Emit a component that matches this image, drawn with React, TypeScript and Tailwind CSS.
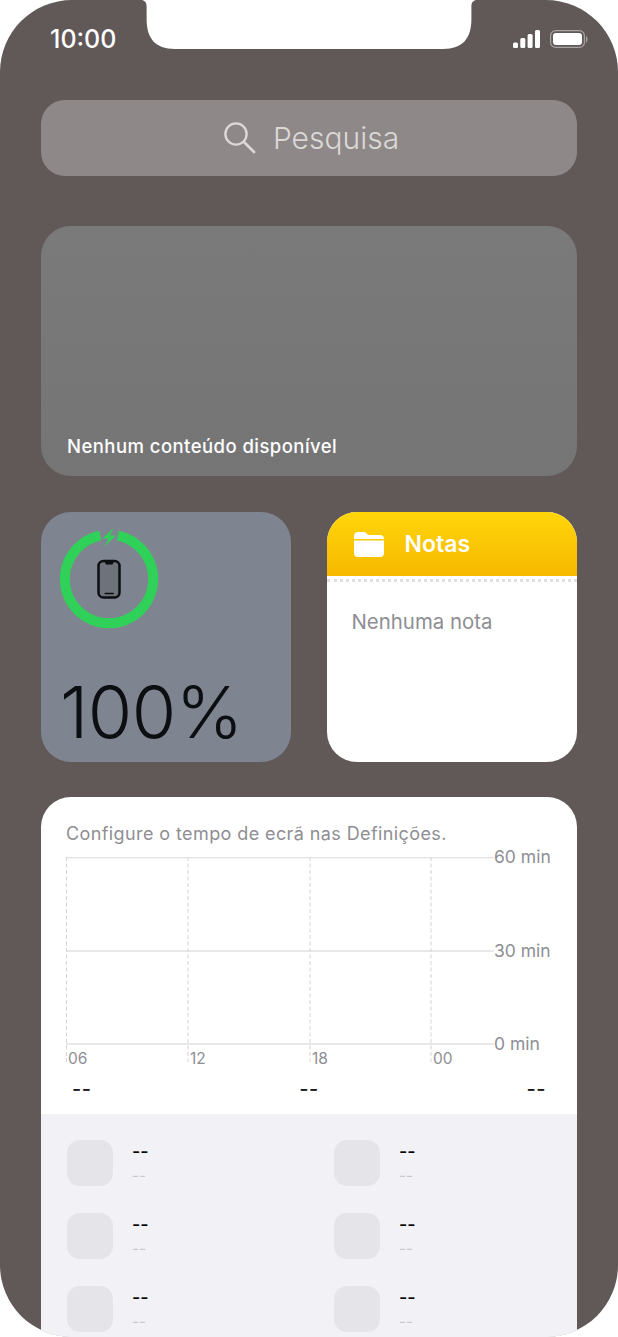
const font = { fontFamily: 'Inter, "Noto Sans", sans-serif' }

function Notch() {
    return (
        <svg className="absolute left-[138px] top-0" width="342" height="50" viewBox="0 0 342 50">
            <path
                d="M2 0H3C6.5 0 8.6 2.5 8.6 6V19C8.6 38 17 49 37 49H305C325 49 333.4 38 333.4 19V6C333.4 2.5 335.5 0 339 0H340V-1H2Z"
                fill="#fff"
            />
        </svg>
    )
}

function StatusIcons() {
    return (
        <svg width="78" height="22" viewBox="0 0 78 22" fill="none">
            <rect x="1" y="14.5" width="5" height="5.5" rx="1.5" fill="#fff" />
            <rect x="8.3" y="10" width="5" height="10" rx="1.5" fill="#fff" />
            <rect x="15.6" y="6" width="5" height="14" rx="1.5" fill="#fff" />
            <rect x="23" y="2" width="5" height="18" rx="1.5" fill="#fff" />
            <rect x="38.6" y="2.6" width="33.8" height="16.8" rx="5" stroke="#a9a4a4" strokeWidth="1.2" />
            <rect x="41" y="5" width="29" height="12" rx="3" fill="#fff" />
            <path d="M74 8C76 8.5 76 13.5 74 15Z" fill="#a9a4a4" />
        </svg>
    )
}

function SearchGlyph() {
    return (
        <svg width="32" height="32" viewBox="0 0 32 32" fill="none" stroke="currentColor" strokeWidth="2.4" strokeLinecap="round">
            <circle cx="12" cy="12" r="10.6" />
            <path d="M20 20L30 30" strokeWidth="2.8" />
        </svg>
    )
}

function BatteryRing() {
    return (
        <svg width="104" height="104" viewBox="0 0 104 104" fill="none">
            <path d="M42.2 8.7A44.2 44.2 0 1 0 59.8 8.7" stroke="#30d158" strokeWidth="10" />
            <path d="M55.5 1L44.5 11.5H50.5L46.5 19.5L58 8.5H52Z" fill="#30d158" />
            <rect x="40.5" y="34" width="21" height="36.5" rx="5" fill="#6d727b" stroke="#0c0e12" strokeWidth="2.5" />
            <path d="M47 34.5H55.5C55.5 37 54.5 37.5 53.5 37.5H49C48 37.5 47 37 47 34.5Z" fill="#0c0e12" />
            <rect x="46.5" y="65.8" width="9.5" height="1.4" rx="0.7" fill="#0c0e12" />
        </svg>
    )
}

function FolderIcon() {
    return (
        <svg width="30" height="25" viewBox="0 0 30 25" fill="#fff">
            <path d="M0 4C0 1.5 1.5 0 4 0H9.5C11.5 0 12.5 1 14 3H26C28.5 3 30 4.5 30 7H0Z" />
            <path d="M0 8.5H30V21C30 23.5 28.5 25 26 25H4C1.5 25 0 23.5 0 21Z" />
        </svg>
    )
}

function ChartLines() {
    const dashed = [0.5, 122, 244, 365]
    const solid = [0.5, 94, 187]
    return (
        <svg width="428" height="206" viewBox="0 0 428 206" fill="none" className="block">
            {solid.map((y) => (
                <line key={y} x1="0" x2="428" y1={y} y2={y} stroke="#e0e0e2" strokeWidth="1.5" />
            ))}
            {dashed.map((x) => (
                <line key={x} x1={x} x2={x} y1="0" y2="205" stroke="#d4d4d7" strokeWidth="1" strokeDasharray="4 2.5" />
            ))}
        </svg>
    )
}

function AppRow() {
    return (
        <div className="flex h-[46px] gap-[19px]">
            <div className="h-[46px] w-[46px] rounded-[13px] bg-[#e4e4e9]" />
            <div className="flex flex-col">
                <span className="h-[24px] text-[18px] font-medium leading-[24px] text-black">--</span>
                <span className="h-[22px] text-[15px] leading-[24px] text-[#c7c7cc]">--</span>
            </div>
        </div>
    )
}

export default function App() {
    return (
        <div style={font} className="relative h-[1337px] w-[618px] overflow-hidden rounded-[72px] bg-[#615858]">
            <Notch />
            <div className="absolute left-[50px] top-[24px] text-[25px] font-medium leading-[30px] text-white">10:00</div>
            <div className="absolute left-[512px] top-[28px]">
                <StatusIcons />
            </div>

            <div className="flex flex-col px-[41px] pt-[100px]">
                <div className="flex h-[76px] items-center justify-center gap-[17px] rounded-[24px] bg-[#8e8888] pl-[5px] text-[#dcd8d6]">
                    <SearchGlyph />
                    <span className="text-[30px] font-light">Pesquisa</span>
                </div>

                <div className="mt-[50px] flex h-[250px] items-end rounded-[30px] bg-gradient-to-b from-[#7a7a7b] to-[#757576] px-[26px] pb-[18px]">
                    <span className="text-[18.5px] font-medium leading-[24px] tracking-[0.45px] text-white">Nenhum conteúdo disponível</span>
                </div>

                <div className="mt-[36px] flex justify-between">
                    <div className="flex h-[250px] w-[250px] flex-col justify-between rounded-[30px] bg-[#7e8590] pb-[6px] pl-[17px] pt-[15px]">
                        <BatteryRing />
                        <span className="pl-[2px] text-[72px] font-[350] leading-[88px] tracking-[-0.5px] text-[#0c0e12]">100%</span>
                    </div>
                    <div className="h-[250px] w-[250.5px] overflow-hidden rounded-[30px] bg-white">
                        <div className="flex h-[64px] items-center gap-[21px] bg-gradient-to-b from-[#ffd60a] to-[#f6b800] pl-[27px]">
                            <FolderIcon />
                            <span className="text-[23px] font-semibold text-white">Notas</span>
                        </div>
                        <div className="mt-[3px] h-[3px] border-t-[3px] border-dotted border-[#e0e0e2]" />
                        <p className="mt-[28px] pl-[25px] text-[20.4px] leading-[24px] text-[#8e8e93]">Nenhuma nota</p>
                    </div>
                </div>

                <div className="mt-[35px] h-[600px] overflow-hidden rounded-t-[30px] bg-white">
                    <div className="h-[317px] px-[25px] pt-[26px]">
                        <p className="h-[34px] text-[18px] leading-[22px] tracking-[0.4px] text-[#8e8e93]">Configure o tempo de ecrã nas Definições.</p>
                        <div className="flex">
                            <ChartLines />
                            <div className="-mt-[12px] flex h-[211px] flex-col justify-between text-[17.5px] leading-[24px] text-[#8e8e93]">
                                <span>60 min</span>
                                <span>30 min</span>
                                <span>0 min</span>
                            </div>
                        </div>
                        <div className="-mt-[13px] grid w-[428px] grid-cols-[122px_122px_121px_63px] pl-[2px] text-[15.5px] leading-[18px] text-[#8e8e93]">
                            <span>06</span>
                            <span>12</span>
                            <span>18</span>
                            <span>00</span>
                        </div>
                        <div className="mt-[9px] flex justify-between px-[6px] text-[20px] font-medium leading-[24px] tracking-[0.5px] text-[#1c1c1e]">
                            <span>--</span>
                            <span>--</span>
                            <span>--</span>
                        </div>
                    </div>
                    <div className="grid h-[300px] grid-cols-[267px_1fr] content-start gap-y-[27px] bg-[#f1f1f6] pl-[26px] pt-[26px]">
                        <AppRow />
                        <AppRow />
                        <AppRow />
                        <AppRow />
                        <AppRow />
                        <AppRow />
                    </div>
                </div>
            </div>
        </div>
    )
}
